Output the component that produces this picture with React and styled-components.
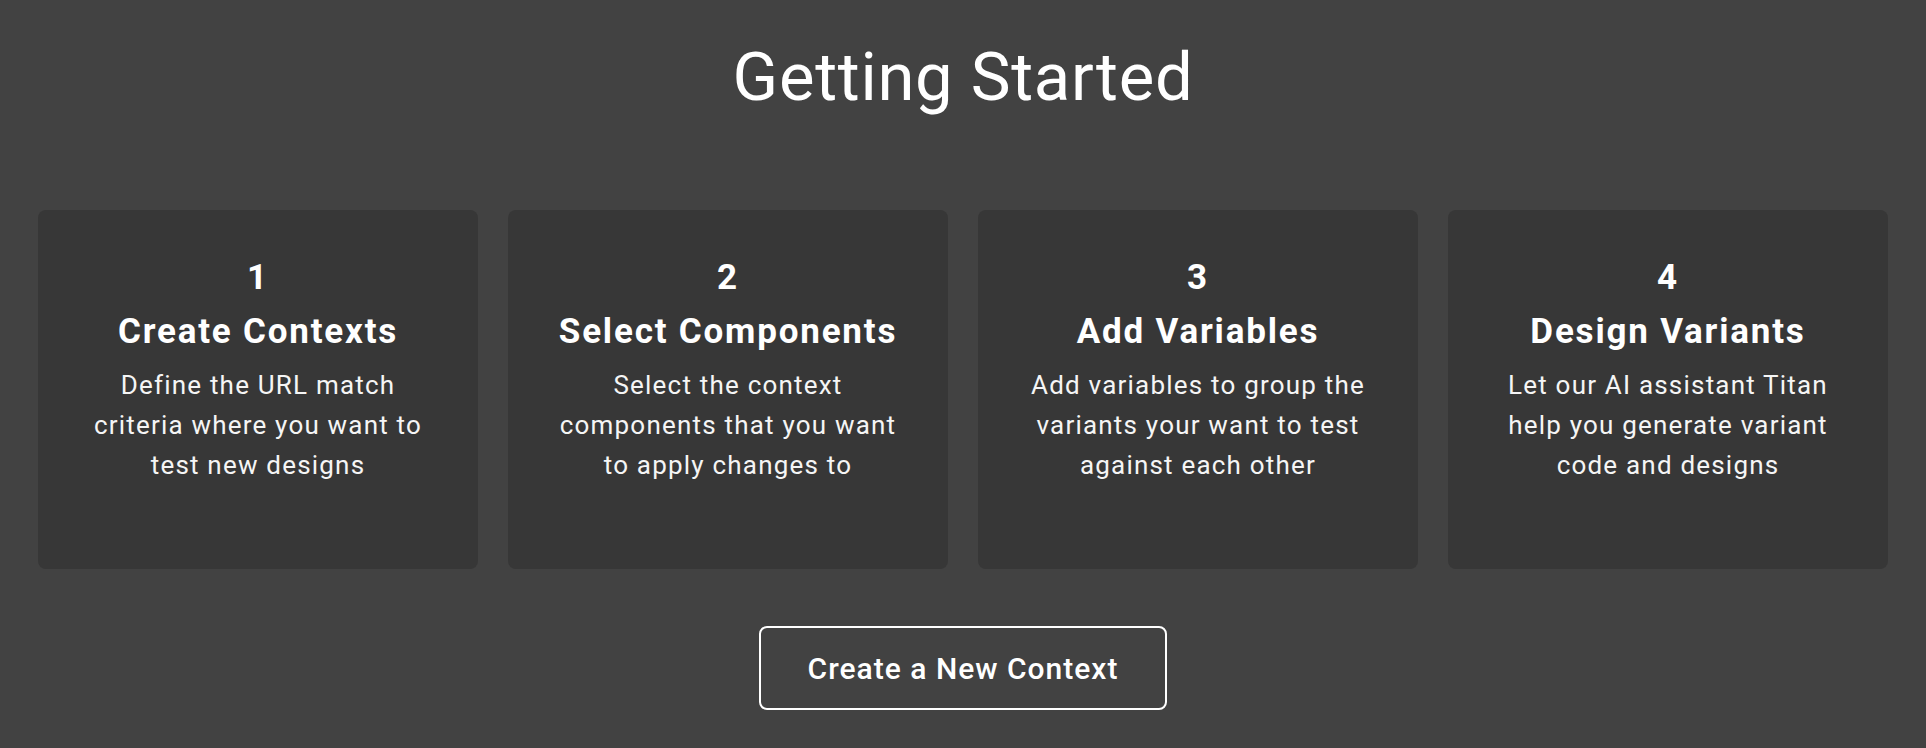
import React from "react";
import styled, { createGlobalStyle } from "styled-components";

const GlobalStyle = createGlobalStyle`
  html, body {
    margin: 0;
    padding: 0;
    background: #424242;
  }
  body {
    font-family: Roboto, "Noto Sans", "Liberation Sans", sans-serif;
    color: #ffffff;
  }
  * { box-sizing: border-box; }
`;

const Page = styled.main`
  min-height: 748px;
  padding: 37px 38px 0;
  display: flex;
  flex-direction: column;
  align-items: center;
`;

const Title = styled.h1`
  margin: 0;
  font-size: 67px;
  font-weight: 400;
  letter-spacing: 0.7px;
  line-height: 80px;
  text-align: center;
  color: #ffffff;
`;

const Steps = styled.section`
  width: 100%;
  margin-top: 93px;
  display: grid;
  grid-template-columns: repeat(4, 1fr);
  gap: 30px;
`;

const Card = styled.article`
  height: 359px;
  background: #373737;
  border-radius: 8px;
  padding: 44px 20px 0;
  display: flex;
  flex-direction: column;
  align-items: center;
  text-align: center;
`;

const StepNumber = styled.div`
  font-size: 35px;
  font-weight: 700;
  letter-spacing: 1.8px;
  line-height: 48px;
`;

const StepTitle = styled.h2`
  margin: 0;
  font-size: 35px;
  font-weight: 700;
  letter-spacing: 1.8px;
  line-height: 60px;
`;

const StepText = styled.p`
  margin: 3px 0 0;
  max-width: 346px;
  font-size: 26px;
  font-weight: 400;
  letter-spacing: 1.2px;
  line-height: 40px;
  color: #f5f5f5;
`;

const OutlineButton = styled.button`
  margin-top: 57px;
  height: 84px;
  padding: 0 47px;
  background: transparent;
  border: 2px solid #ffffff;
  border-radius: 8px;
  color: #ffffff;
  font-family: inherit;
  font-size: 30px;
  font-weight: 500;
  letter-spacing: 1px;
  cursor: pointer;
`;

const steps = [
  {
    n: 1,
    title: "Create Contexts",
    text: "Define the URL match criteria where you want to test new designs",
  },
  {
    n: 2,
    title: "Select Components",
    text: "Select the context components that you want to apply changes to",
  },
  {
    n: 3,
    title: "Add Variables",
    text: "Add variables to group the variants your want to test against each other",
  },
  {
    n: 4,
    title: "Design Variants",
    text: "Let our AI assistant Titan help you generate variant code and designs",
  },
];

export default function App() {
  return (
    <>
      <GlobalStyle />
      <Page>
        <Title>Getting Started</Title>
        <Steps>
          {steps.map((s) => (
            <Card key={s.n}>
              <StepNumber>{s.n}</StepNumber>
              <StepTitle>{s.title}</StepTitle>
              <StepText>{s.text}</StepText>
            </Card>
          ))}
        </Steps>
        <OutlineButton>Create a New Context</OutlineButton>
      </Page>
    </>
  );
}
